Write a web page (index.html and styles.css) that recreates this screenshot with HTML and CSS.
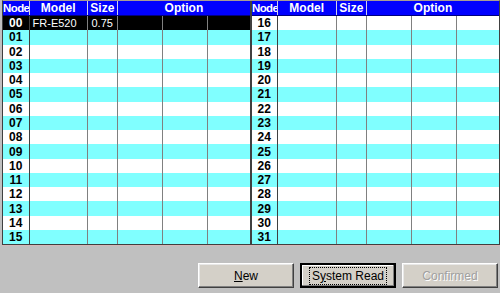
FILE: index.html
```html
<!DOCTYPE html>
<html lang="en">
<head>
  <meta charset="UTF-8">
  <title>Node List</title>
  <link rel="stylesheet" href="styles.css">
</head>
<body>
  <div class="grid-box">
    <table class="grid">
      <colgroup>
        <col class="c-node"><col class="c-model"><col class="c-size"><col class="c-opt"><col class="c-opt"><col class="c-opt3">
        <col class="c-node"><col class="c-model2"><col class="c-size"><col class="c-opt"><col class="c-opt"><col class="c-opt4">
      </colgroup>
      <thead>
        <tr>
          <th class="h-node">Node</th><th>Model</th><th>Size</th><th colspan="3">Option</th>
          <th class="h-node split">Node</th><th>Model</th><th>Size</th><th colspan="3">Option</th>
        </tr>
      </thead>
      <tbody id="rows"></tbody>
    </table>
  </div>

  <div class="actions">
    <button class="btn"><u>N</u>ew</button>
    <button class="btn default"><span class="focus">S<u>y</u>stem Read</span></button>
    <button class="btn" disabled>Confirmed</button>
  </div>

  <script>
    // 16 rows, nodes 00-15 on the left and 16-31 on the right
    const body = document.getElementById('rows');
    const pad = n => (n < 10 ? '0' : '') + n;
    for (let i = 0; i < 16; i++) {
      const tr = document.createElement('tr');
      const left = i === 0
        ? '<td class="node sel">00</td><td class="sel model">FR-E520</td><td class="sel size">0.75</td><td class="sel"></td><td class="sel"></td><td class="sel"></td>'
        : `<td class="node">${pad(i)}</td><td></td><td></td><td></td><td></td><td></td>`;
      const right = `<td class="node split">${pad(i + 16)}</td><td></td><td></td><td></td><td></td><td></td>`;
      tr.innerHTML = left + right;
      body.appendChild(tr);
    }
  </script>
</body>
</html>
```

FILE: styles.css
```css
/* Page */
body {
  margin: 0;
  background: #c0c0c0;
  font-family: 'Liberation Sans', Arial, sans-serif;
}

/* Grid frame */
.grid-box {
  margin-left: 2px;
  width: 496px;
  border-top: 1px solid #a89c94;
  border-left: 1px solid #404040;
  border-right: 1px solid #404040;
  border-bottom: 1px solid #404040;
  box-shadow: 0 1px 0 #d8b8b8;
  background: #fff;
}

.grid {
  width: 100%;
  table-layout: fixed;
  border-collapse: collapse;
  font-size: 11px;
}

.c-node { width: 26px; }
.c-model { width: 58px; }
.c-model2 { width: 59px; }
.c-size { width: 30px; }
.c-opt { width: 45px; }
.c-opt3 { width: 43px; }
.c-opt4 { width: 42px; }

/* Header */
.grid th {
  height: 14px;
  padding: 0;
  background: #0000ff;
  color: #fff;
  font-weight: bold;
  font-size: 12px;
  line-height: 13px;
  border-left: 1px solid #d0d0e8;
  border-bottom: 1px solid #000080;
  white-space: nowrap;
  overflow: hidden;
}

.grid th:first-child {
  border-left: 0;
}

.grid th.h-node {
  font-size: 11.5px;
  letter-spacing: -0.6px;
}

/* Rows */
.grid td {
  height: 14.27px;
  padding: 0;
  border-left: 1px solid #808080;
  line-height: 12px;
  white-space: nowrap;
  overflow: hidden;
}

.grid td:first-child {
  border-left: 0;
}

.grid tbody tr:nth-child(even) td {
  background: #80ffff;
}

.grid td.node {
  text-align: center;
  font-weight: bold;
  font-size: 12px;
  border-right: 1px solid #404040;
}

.grid .split {
  border-left: 2px solid #404040;
}

.grid td.sel {
  background: #000;
  color: #fff;
}

.grid td.model {
  padding-left: 3px;
}

.grid td.size {
  text-align: right;
  padding-right: 4px;
  font-size: 11px;
}

/* Buttons */
.actions {
  display: flex;
  justify-content: flex-end;
  gap: 6px;
  padding: 18px 2px 0 0;
}

.btn {
  width: 96px;
  height: 25px;
  padding: 0;
  background: #d4d0c8;
  font-family: 'Liberation Sans', Arial, sans-serif;
  font-size: 12px;
  color: #000;
  border: 1px solid;
  border-color: #fff #404040 #404040 #fff;
  box-shadow: inset -1px -1px 0 #808080, inset 1px 1px 0 #e8e8e8;
}

.btn.default {
  border: 2px solid #000;
  box-shadow: inset -1px -1px 0 #808080, inset 1px 1px 0 #fff;
}

.focus {
  outline: 1px dotted #000;
  padding: 1px 2px;
}

.btn:disabled {
  color: #a0a0a0;
  text-shadow: 1px 1px 0 #fff;
}
```
